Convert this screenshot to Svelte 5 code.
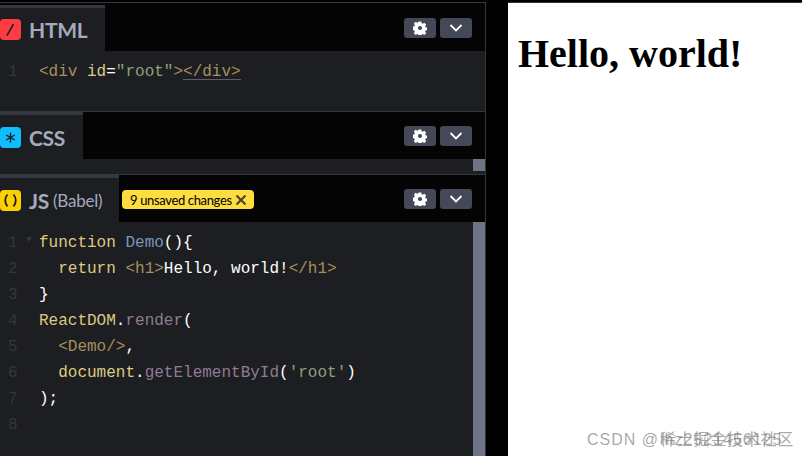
<script>
	const jsLines = [
		[["fn", "function "], ["type", "Demo"], ["plain", "(){"]],
		[["fn", "  return "], ["tag", "<h1>"], ["plain", "Hello, world!"], ["tag", "</h1>"]],
		[["plain", "}"]],
		[["fn", "ReactDOM"], ["plain", "."], ["prop", "render"], ["plain", "("]],
		[["tag", "  <Demo/>"], ["plain", ","]],
		[["fn", "  document"], ["plain", "."], ["prop", "getElementById"], ["plain", "("], ["str", "'root'"], ["plain", ")"]],
		[["plain", ");"]],
		[]
	];
	const htmlLine = [["tag", "<div "], ["fn", "id"], ["plain", "="], ["str", '"root"'], ["tag", ">"]];
</script>

{#snippet controls()}
	<div class="controls">
		<button class="ctl" aria-label="Settings">
			<svg width="14" height="14" viewBox="0 0 14 14">
				<path
					fill="#fff"
					fill-rule="evenodd"
					d="M5.7 0.5h2.6l.4 1.8 1 .45 1.6-1 1.85 1.85-1 1.6.45 1 1.8.4v2.6l-1.8.4-.45 1 1 1.6-1.85 1.85-1.6-1-1 .45-.4 1.8H5.7l-.4-1.8-1-.45-1.6 1-1.85-1.85 1-1.6-.45-1-1.8-.4V5.6l1.8-.4.45-1-1-1.6L2.7 .75l1.6 1 1-.45zM7 4.9a2.1 2.1 0 1 0 0 4.2 2.1 2.1 0 0 0 0-4.2z"
				/>
			</svg>
		</button>
		<button class="ctl" aria-label="Collapse">
			<svg width="14" height="10" viewBox="0 0 14 10">
				<path d="M1.5 2l5.5 5.500L12.500 2" fill="none" stroke="#fff" stroke-width="1.8" />
			</svg>
		</button>
	</div>
{/snippet}

<div class="page">
	<div class="editors">
		<section class="panel first">
			<header>
				<div class="tab">
					<span class="logo html">
						<svg width="21" height="21" viewBox="0 0 21 21">
							<path d="M7 16.500L13.500 5" stroke="#1d1e22" stroke-width="1.6" />
						</svg>
					</span>
					<span class="name">HTML</span>
				</div>
				{@render controls()}
			</header>
			<div class="code html-code">
				<div class="line">
					<span class="num">1</span>
					<span class="src">{#each htmlLine as [kind, text]}<span class={kind}>{text}</span>{/each}<span class="tag match">{"</div>"}</span></span>
				</div>
			</div>
		</section>

		<section class="panel">
			<header>
				<div class="tab css-tab">
					<span class="logo css">
						<svg width="21" height="21" viewBox="0 0 21 21">
							<path d="M10.5 5.500v10M6.200 8l8.600 5M14.800 8l-8.600 5" stroke="#1d1e22" stroke-width="1.4" />
						</svg>
					</span>
					<span class="name">CSS</span>
				</div>
				{@render controls()}
			</header>
			<div class="code css-code">
				<span class="thumb"></span>
			</div>
		</section>

		<section class="panel js-panel">
			<header>
				<div class="tab js-tab">
					<span class="logo js">
						<svg width="21" height="21" viewBox="0 0 21 21">
							<path
								d="M7.500 4.500C4.500 8 4.500 13 7.500 16.500M13.500 4.500c3 3.500 3 8.500 0 12"
								fill="none"
								stroke="#1d1e22"
								stroke-width="1.8"
							/>
						</svg>
					</span>
					<span class="name">JS</span>
					<span class="sub">(Babel)</span>
				</div>
				<div class="badge">
					9 unsaved changes
					<svg width="12" height="12" viewBox="0 0 12 12">
						<path d="M1.500 1.500l9 9M10.500 1.500l-9 9" stroke="#4c4526" stroke-width="2.200" />
					</svg>
				</div>
				{@render controls()}
			</header>
			<div class="code js-code">
				<div class="lines">
					{#each jsLines as parts, i}
						<div class="line">
							<span class="num">{i + 1}</span>
							{#if i === 0}<span class="fold"></span>{/if}
							<span class="src">{#each parts as [kind, text]}<span class={kind}>{text}</span>{/each}</span>
						</div>
					{/each}
				</div>
				<span class="bar"></span>
			</div>
		</section>
	</div>

	<div class="gutter"></div>

	<main class="preview">
		<h1>Hello, world!</h1>
	</main>

	<div class="watermark">
		<span>CSDN @</span>
		<span class="over a">lhz2521456125</span>
		<span class="over b">稀土掘金技术社区</span>
	</div>
</div>

<style>
	:global(body) {
		background: #000;
		overflow: hidden;
	}

	.page {
		background: #000;
		box-sizing: border-box;
		display: flex;
		height: 456px;
		padding-top: 2px;
		position: relative;
		width: 802px;
	}

	.editors {
		border-right: 1px solid #36373d;
		border-top: 1px solid #36373d;
		display: flex;
		flex-direction: column;
		flex: none;
		width: 485px;
	}

	.panel {
		border-top: 1px solid #36373d;
	}

	.panel.first {
		border-top: 0;
	}

	.js-panel {
		flex: 1;
		display: flex;
		flex-direction: column;
		min-height: 0;
	}

	header {
		align-items: flex-start;
		background: #040404;
		display: flex;
		height: 47px;
	}

	.first header {
		height: 48px;
		padding-top: 2px;
		box-sizing: border-box;
	}

	.tab {
		align-items: center;
		background: #1d1e22;
		border-top: 3px solid #343640;
		box-sizing: border-box;
		display: flex;
		height: 100%;
		width: 105px;
	}

	.css-tab {
		width: 83px;
	}

	.js-tab {
		width: 119px;
	}

	.logo {
		border-radius: 4px;
		display: block;
		flex: none;
		height: 21px;
		width: 21px;
	}

	.logo svg {
		display: block;
	}

	.html {
		background: #ff3c41;
	}

	.css {
		background: #0ebeff;
	}

	.js {
		background: #fcd000;
	}

	.name {
		color: #a5aabd;
		font-family: Lato, "Liberation Sans", sans-serif;
		font-size: 21px;
		font-weight: 700;
		letter-spacing: -0.3px;
		margin-left: 8px;
	}

	.sub {
		color: #a5aabd;
		font-family: Lato, "Liberation Sans", sans-serif;
		font-size: 17px;
		margin-left: 4px;
		margin-top: 1px;
		letter-spacing: -0.2px;
	}

	.badge {
		align-items: center;
		background: #ffdd40;
		border-radius: 4px;
		color: #000;
		display: flex;
		font-family: Lato, "Liberation Sans", sans-serif;
		font-size: 13px;
		gap: 3px;
		height: 19px;
		letter-spacing: -0.35px;
		margin: 15px 0 0 3px;
		padding: 0 7px 0 8px;
		white-space: nowrap;
	}

	.controls {
		display: flex;
		gap: 4px;
		margin: 14px 13px 0 auto;
	}

	.first .controls {
		margin-top: 13px;
	}

	.ctl {
		align-items: center;
		background: #444857;
		border: 0;
		border-radius: 3px;
		display: flex;
		height: 20px;
		justify-content: center;
		padding: 0;
		width: 32px;
	}

	.code {
		background: #1d1e22;
		display: flex;
		font-family: "Liberation Mono", monospace;
		font-size: 16px;
	}

	.html-code {
		box-sizing: border-box;
		height: 60px;
		padding-top: 8px;
	}

	.css-code {
		height: 15px;
		justify-content: flex-end;
	}

	.thumb {
		background: #6e7385;
		height: 12px;
		width: 12px;
	}

	.js-code {
		flex: 1;
		min-height: 0;
	}

	.lines {
		flex: 1;
		padding-top: 8px;
	}

	.bar {
		background: #6e7385;
		flex: none;
		width: 12px;
	}

	.line {
		display: flex;
		height: 26px;
		line-height: 26px;
		position: relative;
	}

	.num {
		color: #34363e;
		flex: none;
		padding-left: 8px;
		width: 31px;
	}

	.fold {
		border-left: 3.500px solid transparent;
		border-right: 3.500px solid transparent;
		border-top: 5px solid #34363e;
		left: 26px;
		position: absolute;
		top: 7px;
	}

	.src {
		white-space: pre;
	}

	.tag {
		color: #a88f5c;
	}

	.fn {
		color: #ddca7e;
	}

	.plain {
		color: #fff;
	}

	.str {
		color: #8da07d;
	}

	.type {
		color: #7b96bd;
	}

	.prop {
		color: #8f7c90;
	}

	.match {
		border-bottom: 1px solid #5c5f6b;
		display: inline-block;
		height: 20px;
		line-height: 26px;
		vertical-align: top;
	}

	.gutter {
		flex: none;
		width: 22px;
	}

	.preview {
		background: #fff;
		border-top: 1px solid #36373d;
		flex: 1;
		padding: 0 8px 0 10px;
	}

	h1 {
		color: #000;
		font-family: "Liberation Serif", serif;
		font-size: 40px;
		font-weight: 700;
		margin: 27px 0 0;
	}

	.watermark {
		bottom: 6px;
		color: rgba(120, 120, 120, 0.65);
		font-family: "Liberation Sans", "Noto Sans CJK SC", sans-serif;
		font-size: 16px;
		left: 587px;
		letter-spacing: 1px;
		line-height: 20px;
		position: absolute;
		white-space: nowrap;
	}

	.over {
		left: 73px;
		position: absolute;
		top: 0;
	}

	.over.b {
		letter-spacing: 0.750px;
	}
</style>
